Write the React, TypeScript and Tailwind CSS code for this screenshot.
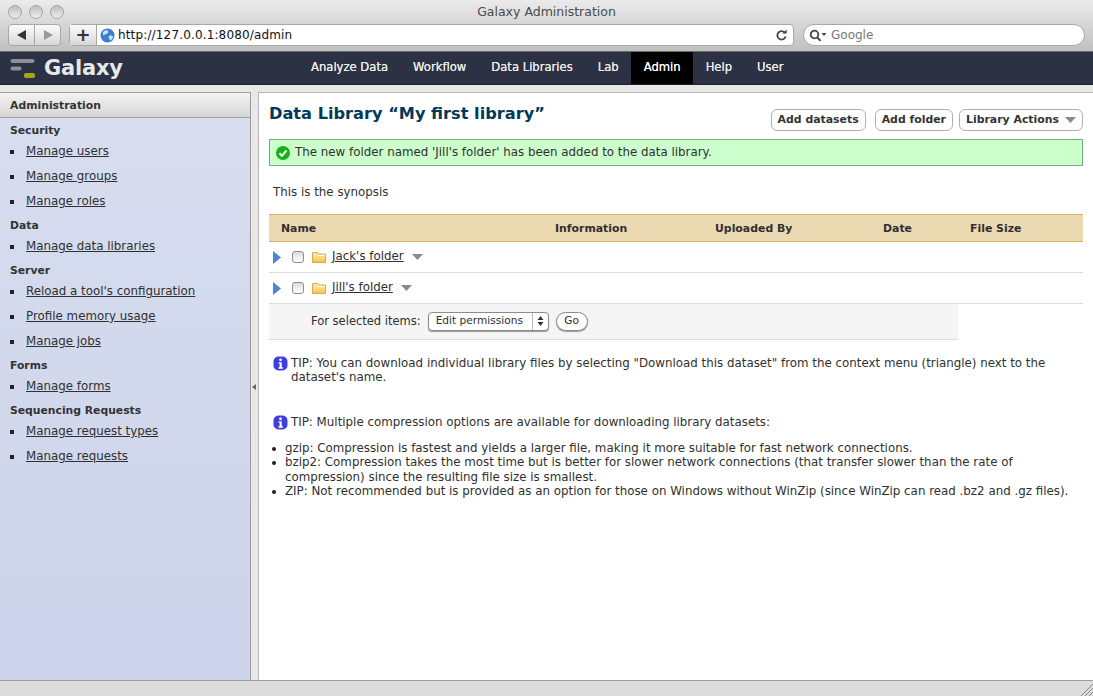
const font = "font-['DejaVu_Sans',sans-serif]";

const sections = [
  { title: "Security", links: ["Manage users", "Manage groups", "Manage roles"] },
  { title: "Data", links: ["Manage data libraries"] },
  { title: "Server", links: ["Reload a tool's configuration", "Profile memory usage", "Manage jobs"] },
  { title: "Forms", links: ["Manage forms"] },
  { title: "Sequencing Requests", links: ["Manage request types", "Manage requests"] },
];

const tabs = ["Analyze Data", "Workflow", "Data Libraries", "Lab", "Admin", "Help", "User"];

function Triangle() {
  return (
    <svg width="11" height="6" viewBox="0 0 11 6">
      <path d="M0 0h11L5.5 6z" fill="#8a8a8a" />
    </svg>
  );
}

function InfoIcon() {
  return (
    <svg width="15" height="15" viewBox="0 0 15 15" className="shrink-0">
      <rect x="0.5" y="0.5" width="14" height="14" rx="5" fill="#3f3fe0" />
      <circle cx="7.5" cy="3.8" r="1.4" fill="#fff" />
      <path d="M5.5 6.3h3.2v5h1.1v1.4H5.4v-1.4h1.2V7.6H5.5z" fill="#fff" />
    </svg>
  );
}

function FolderIcon() {
  return (
    <svg width="14" height="12" viewBox="0 0 14 12">
      <defs>
        <linearGradient id="fold" x1="0" y1="0" x2="0" y2="1">
          <stop offset="0" stopColor="#fdf0b8" />
          <stop offset="1" stopColor="#f4c24a" />
        </linearGradient>
      </defs>
      <path d="M0.5 1.5h5l1 1.5h7v8.5h-13z" fill="url(#fold)" stroke="#d9ab4b" />
      <path d="M6 4.5h7" stroke="#fff" />
    </svg>
  );
}

function FolderRow({ name }: { name: string }) {
  return (
    <div className="flex h-[31px] items-center border-b border-[#dcdcdc]">
      <svg width="8" height="13" viewBox="0 0 8 13" className="ml-[4px] mt-[2px]">
        <path d="M0 0l8 6.5L0 13z" fill="#4d86d6" />
      </svg>
      <span className="ml-[11px] h-[12px] w-[12px] rounded-[3px] border border-[#8c8c8c] bg-gradient-to-b from-[#dcdcdc] to-white"></span>
      <span className="ml-[8px] flex"><FolderIcon /></span>
      <a className="ml-[6px] text-[#303030] underline">{name}</a>
      <span className="ml-[8px] flex"><Triangle /></span>
    </div>
  );
}

export default function App() {
  return (
    <div className={`flex h-[696px] w-[1093px] flex-col overflow-hidden bg-white text-[11.85px] text-[#303030] ${font}`}>
      {/* window chrome */}
      <div className="h-[52px] shrink-0 border-b border-[#6a6a6a] bg-gradient-to-b from-[#ebebeb] to-[#c0c0c0]">
        <div className="relative flex h-[24px] items-center gap-[7px] pl-[8px]">
          <span className="h-[14px] w-[14px] rounded-full border border-[#a5a5a5] bg-gradient-to-b from-[#bdbdbd] to-[#eeeeee]"></span>
          <span className="h-[14px] w-[14px] rounded-full border border-[#a5a5a5] bg-gradient-to-b from-[#bdbdbd] to-[#eeeeee]"></span>
          <span className="h-[14px] w-[14px] rounded-full border border-[#a5a5a5] bg-gradient-to-b from-[#bdbdbd] to-[#eeeeee]"></span>
          <span className="absolute inset-x-0 top-[3px] text-center text-[12.5px] text-[#4a4a4a]">Galaxy Administration</span>
        </div>
        <div className="flex h-[22px] items-center pl-[8px]">
          <div className="flex h-[22px] w-[53px] rounded-[4px] border border-[#a8a8a8] bg-gradient-to-b from-[#fbfbfb] to-[#d8d8d8]">
            <span className="flex w-[26px] items-center justify-center border-r border-[#a8a8a8]">
              <svg width="10" height="10" viewBox="0 0 10 10"><path d="M9 0v10L0 5z" fill="#333" /></svg>
            </span>
            <span className="flex flex-1 items-center justify-center">
              <svg width="10" height="10" viewBox="0 0 10 10"><path d="M1 0v10l9-5z" fill="#999" /></svg>
            </span>
          </div>
          <div className="ml-[8px] flex h-[22px] w-[725px] items-center rounded-[4px] border border-[#a8a8a8] bg-white">
            <span className="flex h-full w-[27px] items-center justify-center border-r border-[#a8a8a8] bg-gradient-to-b from-[#fbfbfb] to-[#d8d8d8] text-[18px] font-bold leading-none text-[#333]">+</span>
            <svg width="15" height="15" viewBox="0 0 15 15" className="ml-[3px]">
              <circle cx="7.5" cy="7.5" r="7" fill="#3a7fd0" />
              <path d="M3 4c2-2 4-2 5-1s-1 3-2 3-2 2-3 1zM9 8c2-1 4 0 4 1s-2 4-3 3-2-3-1-4z" fill="#cfe4f7" />
            </svg>
            <span className="ml-[3px] text-[12px] tracking-[0.15px] text-[#111]">http://127.0.0.1:8080/admin</span>
            <svg width="13" height="13" viewBox="0 0 13 13" className="ml-auto mr-[5px]">
              <path d="M10 4a4.2 4.2 0 1 0 .6 3.4" fill="none" stroke="#444" strokeWidth="1.8" />
              <path d="M7.5 4.6h4.2V0.6z" fill="#444" />
            </svg>
          </div>
          <div className="ml-[9px] flex h-[22px] w-[282px] items-center rounded-full border border-[#a8a8a8] bg-white pl-[5px]">
            <svg width="18" height="13" viewBox="0 0 18 13">
              <circle cx="5.5" cy="5.5" r="3.8" fill="none" stroke="#444" strokeWidth="1.8" />
              <path d="M8.3 8.3l3.2 3.6" stroke="#444" strokeWidth="2" />
              <path d="M12.5 4h5l-2.5 3z" fill="#444" />
            </svg>
            <span className="ml-[4px] text-[12px] text-[#777]">Google</span>
          </div>
        </div>
      </div>

      {/* masthead */}
      <div className="flex h-[33px] shrink-0 items-stretch border-b border-[#222] bg-[#2c3143]">
        <div className="flex w-[298.5px] items-center pl-[10px]">
          <svg width="26" height="23" viewBox="0 0 26 23">
            <rect x="0.5" y="2" width="24" height="4" rx="2" fill="#8d8f96" />
            <rect x="0.5" y="9.5" width="11" height="4" rx="2" fill="#8d8f96" />
            <rect x="14" y="16" width="11" height="5" rx="2" fill="#a8a510" />
          </svg>
          <span className="ml-[8px] text-[21px] font-bold leading-none tracking-[-0.2px] text-[#e6e8ec]">Galaxy</span>
        </div>
        <nav className="flex items-stretch">
          {tabs.map((t) => (
            <span
              key={t}
              className={`flex items-center px-[12.5px] text-[11.6px] [text-shadow:0_0_0.6px_#fff] ${t === "Admin" ? "bg-black text-white" : "text-[#e8e8e8]"}`}
            >
              {t}
            </span>
          ))}
        </nav>
      </div>

      <div className="flex min-h-0 flex-1 bg-[#e8e8e8] pt-[7px]">
        {/* sidebar */}
        <aside className="flex w-[251px] shrink-0 flex-col border-r border-[#9a9a9a] bg-gradient-to-b from-[#d8deef] to-[#ccd3ea]">
          <div className="flex h-[26px] items-center border-y border-[#a0a0a0] bg-gradient-to-b from-[#f4f4f4] to-[#d5d5d5] pl-[10px] pt-[2px] text-[10.85px] font-bold text-[#333]">
            Administration
          </div>
          <div className="pl-[10px] pt-[5px]">
            {sections.map((s) => (
              <div key={s.title}>
                <div className="flex h-[15px] items-center pt-[2px] text-[10.8px] font-bold text-[#333]">{s.title}</div>
                <ul className="mb-[5px] mt-[5px]">
                  {s.links.map((l) => (
                    <li key={l} className="flex h-[25px] items-start pt-[1px] last:h-[20px]">
                      <span className="mr-[12px] mt-[6px] h-[4px] w-[4px] bg-[#222]"></span>
                      <a className="leading-[14px] text-[#303030] underline">{l}</a>
                    </li>
                  ))}
                </ul>
              </div>
            ))}
          </div>
        </aside>

        {/* splitter */}
        <div className="flex w-[7px] shrink-0 items-center pt-[2px]">
          <svg width="5" height="6" viewBox="0 0 5 6" className="ml-[1px]"><path d="M4 0v6L0 3z" fill="#666" /></svg>
        </div>

        {/* main */}
        <main className="min-w-0 flex-1 border-l border-t border-[#b5b5b5] bg-white pl-[10px] pr-[10px]">
          <div className="flex h-[46px] items-start justify-between">
            <h1 className="pt-[9px] text-[16.2px] font-bold leading-[24px] text-[#023858]">Data Library “My first library”</h1>
            <div className="flex pt-[16px] text-[10.9px]">
              <button className="h-[22px] rounded-[6px] border border-[#b0b0b0] px-[6px] font-bold text-[#333]">Add datasets</button>
              <button className="ml-[9px] h-[22px] rounded-[6px] border border-[#b0b0b0] px-[6px] font-bold text-[#333]">Add folder</button>
              <button className="ml-[6px] flex h-[22px] items-center gap-[6px] rounded-[6px] border border-[#b0b0b0] px-[6px] font-bold text-[#333]">
                Library Actions <Triangle />
              </button>
            </div>
          </div>
          <div className="flex h-[27px] items-center border border-[#6fb26f] bg-[#ccffcc] pl-[5px]">
            <svg width="16" height="16" viewBox="0 0 16 16">
              <circle cx="8" cy="8" r="7" fill="#17b117" />
              <path d="M4.5 8.2l2.5 2.6 4.4-5.3" fill="none" stroke="#fff" strokeWidth="2" />
            </svg>
            <span className="ml-[4px]">The new folder named 'Jill's folder' has been added to the data library.</span>
          </div>
          <p className="mt-[18px] pl-[4px]">This is the synopsis</p>
          <div className="mt-[12px]">
            <div className="grid h-[28px] grid-cols-[274px_160px_168px_87px_1fr] items-center border-y border-[#d8b365] bg-[#ebd9b2] pl-[12px] pt-[2px] text-[10.9px] font-bold">
              <span>Name</span>
              <span>Information</span>
              <span>Uploaded By</span>
              <span>Date</span>
              <span>File Size</span>
            </div>
            <FolderRow name="Jack's folder" />
            <FolderRow name="Jill's folder" />
            <div className="flex h-[36px] w-[689px] items-center border-b border-[#dcdcdc] bg-[#f5f5f5] pl-[42px] text-[11.5px]">
              For selected items:
              <span className="ml-[7px] flex h-[19px] w-[121px] items-center rounded-[4px] border border-[#8c8c8c] bg-white pl-[7px] text-[10.6px] shadow-[0_1px_1px_#999]">
                Edit permissions
                <span className="ml-auto flex h-full w-[16px] items-center justify-center border-l border-[#bbb]">
                  <svg width="7" height="10" viewBox="0 0 7 10">
                    <path d="M3.5 0L6.5 4H0.5zM3.5 10L0.5 6H6.5z" fill="#333" />
                  </svg>
                </span>
              </span>
              <span className="ml-[7px] flex h-[19px] w-[32px] items-center justify-center rounded-full border border-[#8c8c8c] bg-white text-[10.6px] shadow-[0_1px_1px_#999]">Go</span>
            </div>
          </div>
          <div className="mt-[16px] flex gap-[3px] pl-[4px] leading-[14.5px]">
            <InfoIcon />
            <p className="pr-[20px]">TIP: You can download individual library files by selecting "Download this dataset" from the context menu (triangle) next to the dataset's name.</p>
          </div>
          <div className="mt-[30px] flex gap-[3px] pl-[4px] leading-[15px]">
            <InfoIcon />
            <p>TIP: Multiple compression options are available for downloading library datasets:</p>
          </div>
          <ul className="mt-[11px] pl-[16px] leading-[14.5px]">
            {[
              "gzip: Compression is fastest and yields a larger file, making it more suitable for fast network connections.",
              "bzip2: Compression takes the most time but is better for slower network connections (that transfer slower than the rate of compression) since the resulting file size is smallest.",
              "ZIP: Not recommended but is provided as an option for those on Windows without WinZip (since WinZip can read .bz2 and .gz files).",
            ].map((t) => (
              <li key={t} className="relative">
                <span className="absolute -left-[13px] top-[6px] h-[4px] w-[4px] rounded-full bg-[#222]"></span>
                {t}
              </li>
            ))}
          </ul>
        </main>
      </div>

      {/* status bar */}
      <div className="relative h-[16px] shrink-0 border-t border-[#9a9a9a] bg-[#dcdcdc]">
        <svg width="12" height="12" viewBox="0 0 12 12" className="absolute bottom-0 right-0">
          <path d="M0 12L12 0M4 12l8-8M8 12l4-4" stroke="#8a8a8a" />
        </svg>
      </div>
    </div>
  );
}
